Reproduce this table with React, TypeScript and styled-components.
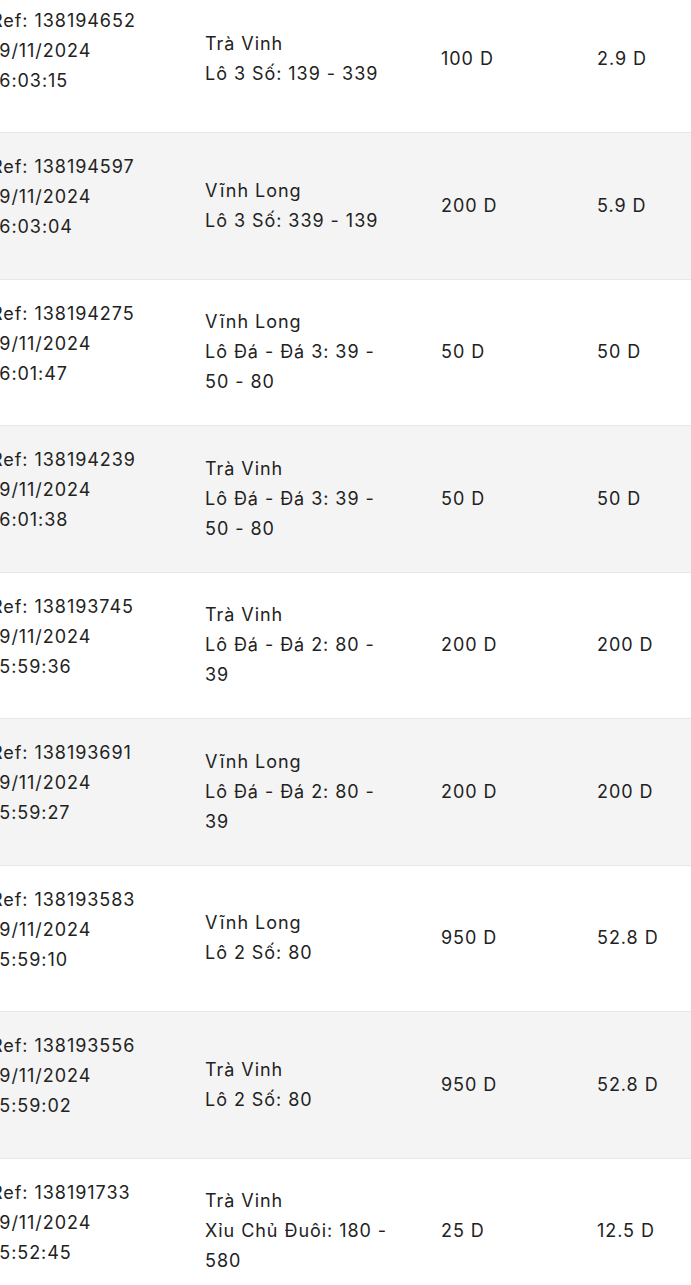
import React from "react";
import styled, { createGlobalStyle } from "styled-components";

const Global = createGlobalStyle`
  html, body { margin: 0; padding: 0; background: #fff; overflow: hidden; }
  body { font-family: Inter, "Noto Sans", sans-serif; color: #222; }
`;

const Table = styled.div`
  margin-top: -13.5px;
  margin-left: -9px;
  display: flex;
  flex-direction: column;
`;

const Row = styled.div<{ $alt: boolean }>`
  display: grid;
  grid-template-columns: 214px 236px 156px 1fr;
  align-items: center;
  height: 146.5px;
  box-sizing: border-box;
  background: ${(p) => (p.$alt ? "#f4f4f4" : "#ffffff")};
  border-bottom: 1px solid #e8e8e8;
  font-size: 18px;
  line-height: 30px;
  letter-spacing: 0.95px;
`;

const RefCell = styled.div`
  padding-bottom: 17px;
  display: flex;
  flex-direction: column;
`;

const BetCell = styled.div`
  padding-right: 51px;
`;

const Amount = styled.div``;

type Item = {
  ref: string;
  time: string;
  place: string;
  bet: string;
  amount: string;
  win: string;
};

const data: Item[] = [
  { ref: "138194652", time: "16:03:15", place: "Trà Vinh", bet: "Lô 3 Số: 139 - 339", amount: "100 D", win: "2.9 D" },
  { ref: "138194597", time: "16:03:04", place: "Vĩnh Long", bet: "Lô 3 Số: 339 - 139", amount: "200 D", win: "5.9 D" },
  { ref: "138194275", time: "16:01:47", place: "Vĩnh Long", bet: "Lô Đá - Đá 3: 39 - 50 - 80", amount: "50 D", win: "50 D" },
  { ref: "138194239", time: "16:01:38", place: "Trà Vinh", bet: "Lô Đá - Đá 3: 39 - 50 - 80", amount: "50 D", win: "50 D" },
  { ref: "138193745", time: "15:59:36", place: "Trà Vinh", bet: "Lô Đá - Đá 2: 80 - 39", amount: "200 D", win: "200 D" },
  { ref: "138193691", time: "15:59:27", place: "Vĩnh Long", bet: "Lô Đá - Đá 2: 80 - 39", amount: "200 D", win: "200 D" },
  { ref: "138193583", time: "15:59:10", place: "Vĩnh Long", bet: "Lô 2 Số: 80", amount: "950 D", win: "52.8 D" },
  { ref: "138193556", time: "15:59:02", place: "Trà Vinh", bet: "Lô 2 Số: 80", amount: "950 D", win: "52.8 D" },
  { ref: "138191733", time: "15:52:45", place: "Trà Vinh", bet: "Xỉu Chủ Đuôi: 180 - 580", amount: "25 D", win: "12.5 D" },
];

export default function App() {
  return (
    <>
      <Global />
      <Table>
        {data.map((d, i) => (
          <Row key={d.ref} $alt={i % 2 === 1}>
            <RefCell>
              <span>Ref: {d.ref}</span>
              <span>19/11/2024</span>
              <span>{d.time}</span>
            </RefCell>
            <BetCell>
              <div>{d.place}</div>
              <div>{d.bet}</div>
            </BetCell>
            <Amount>{d.amount}</Amount>
            <Amount>{d.win}</Amount>
          </Row>
        ))}
      </Table>
    </>
  );
}
